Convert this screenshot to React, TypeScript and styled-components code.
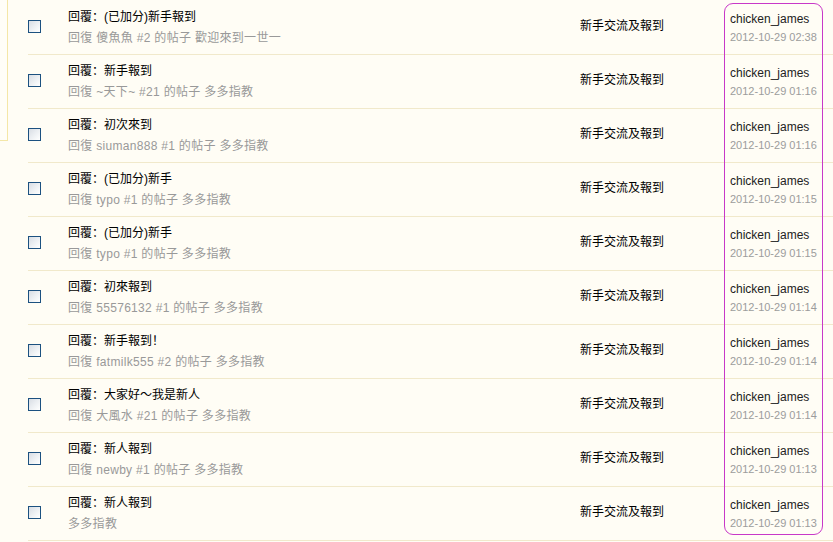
import React from "react";
import styled, { createGlobalStyle } from "styled-components";

const Global = createGlobalStyle`
  html, body { margin: 0; padding: 0; background: #fffdf5; }
  body { font-family: "Liberation Sans", "Noto Sans CJK SC", "Noto Sans CJK TC", sans-serif; font-size: 12px; overflow: hidden; }
`;

const Page = styled.div`
  position: relative;
  display: flex;
  width: 833px;
  height: 542px;
  overflow: hidden;
  background: #fffdf5;
`;

const Side = styled.div`
  width: 28px;
  flex: none;
`;

const SideBox = styled.div`
  width: 8px;
  height: 141px;
  background: #fffef8;
  border-right: 1px solid #f4e7a8;
  border-bottom: 1px solid #f4e7a8;
  box-sizing: border-box;
`;

const List = styled.div`
  flex: 1;
  padding-top: 1px;
`;

const Row = styled.div`
  display: grid;
  grid-template-columns: 40px 512px 150px 1fr;
  height: 53px;
  border-bottom: 1px solid #f1e9cb;
`;

const Check = styled.input.attrs({ type: "checkbox" })`
  appearance: none;
  -webkit-appearance: none;
  margin: 19px 0 0 0;
  width: 13px;
  height: 13px;
  box-sizing: border-box;
  border: 1px solid #1c5180;
  background: linear-gradient(135deg, #d8dde4 0%, #eef1f4 55%, #ffffff 100%);
`;

const Subject = styled.div`
  padding-top: 7px;
`;

const Title = styled.div`
  line-height: 18px;
  color: #000;
  white-space: nowrap;
`;

const Sub = styled.div`
  margin-top: 3px;
  line-height: 18px;
  color: #999;
  white-space: nowrap;
  letter-spacing: 0.3px;
`;

const Forum = styled.div`
  padding-top: 16px;
  line-height: 18px;
  color: #000;
  white-space: nowrap;
`;

const Author = styled.div`
  padding-top: 9px;
`;

const Name = styled.div`
  line-height: 18px;
  color: #222;
`;

const DateText = styled.div`
  line-height: 18px;
  font-size: 11px;
  color: #9c9c9c;
`;

const Mark = styled.div`
  position: absolute;
  left: 724px;
  top: 3px;
  width: 99px;
  height: 532px;
  box-sizing: border-box;
  border: 1px solid #c838c8;
  border-radius: 9px;
  pointer-events: none;
`;

type Item = { title: string; sub: string; time: string };

const items: Item[] = [
  { title: "回覆：(已加分)新手報到", sub: "回復 傻魚魚 #2 的帖子 歡迎來到一世一", time: "2012-10-29 02:38" },
  { title: "回覆：新手報到", sub: "回復 ~天下~ #21 的帖子 多多指教", time: "2012-10-29 01:16" },
  { title: "回覆：初次來到", sub: "回復 siuman888 #1 的帖子 多多指教", time: "2012-10-29 01:16" },
  { title: "回覆：(已加分)新手", sub: "回復 typo #1 的帖子 多多指教", time: "2012-10-29 01:15" },
  { title: "回覆：(已加分)新手", sub: "回復 typo #1 的帖子 多多指教", time: "2012-10-29 01:15" },
  { title: "回覆：初來報到", sub: "回復 55576132 #1 的帖子 多多指教", time: "2012-10-29 01:14" },
  { title: "回覆：新手報到！", sub: "回復 fatmilk555 #2 的帖子 多多指教", time: "2012-10-29 01:14" },
  { title: "回覆：大家好～我是新人", sub: "回復 大風水 #21 的帖子 多多指教", time: "2012-10-29 01:14" },
  { title: "回覆：新人報到", sub: "回復 newby #1 的帖子 多多指教", time: "2012-10-29 01:13" },
  { title: "回覆：新人報到", sub: "多多指教", time: "2012-10-29 01:13" },
];

export default function App() {
  return (
    <Page>
      <Global />
      <Side>
        <SideBox />
      </Side>
      <List>
        {items.map((it, i) => (
          <Row key={i}>
            <div>
              <Check readOnly />
            </div>
            <Subject>
              <Title>{it.title}</Title>
              <Sub>{it.sub}</Sub>
            </Subject>
            <Forum>新手交流及報到</Forum>
            <Author>
              <Name>chicken_james</Name>
              <DateText>{it.time}</DateText>
            </Author>
          </Row>
        ))}
      </List>
      <Mark />
    </Page>
  );
}
